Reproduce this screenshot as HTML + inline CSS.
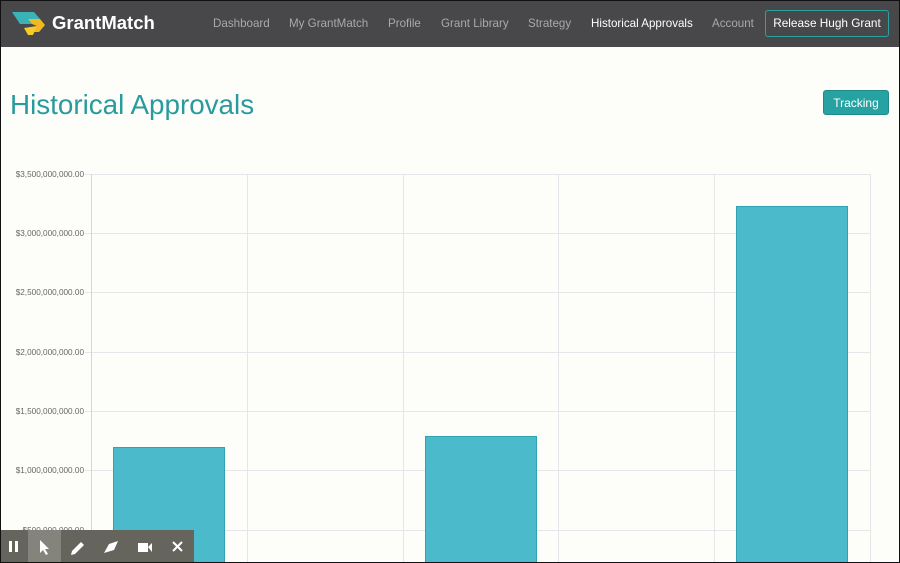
<!DOCTYPE html>
<html><head><style>
body{margin:0;width:900px;height:563px;overflow:hidden;background:#fdfdfa;font-family:"Liberation Sans",sans-serif;position:relative}
.frame{position:absolute;inset:0;border:1px solid #111;pointer-events:none;z-index:9}
.nav{position:absolute;left:0;top:0;width:900px;height:47px;background:#48484b;}
.nav a{position:absolute;top:17px;font-size:11.6px;color:#a9a9a9;text-decoration:none}
.logo{position:absolute;left:52px;top:12px;font-size:18.5px;font-weight:bold;color:#fff}
.btn{position:absolute;left:765px;top:10px;width:122px;height:25px;border:1px solid #2aa3a0;border-radius:3px;color:#fff;font-size:11.8px;text-align:center;line-height:25px}
h1{position:absolute;left:10px;top:89px;margin:0;font-size:27.8px;font-weight:normal;color:#2a9b9c}
.track{position:absolute;left:823px;top:90px;width:66px;height:25px;background:#27a2a2;border:1px solid #1e8a8a;border-radius:3px;color:#fff;font-size:12px;text-align:center;line-height:24px;box-sizing:border-box}
.tb{position:absolute;left:0;top:530px;width:194px;height:33px;background:#65645d}
</style></head><body>
<div class="nav">
<svg style="position:absolute;left:10px;top:10px" width="40" height="27" viewBox="0 0 40 27">
<polygon points="2,2 24,2 30,9 18,9 22,14 10,14" fill="#3ab3b8"/>
<polygon points="18,9 30,9 35,15 29,22 23,22 27,16 22,14" fill="#f2b822"/>
<polygon points="14,18 27,16 23,25 18,25" fill="#f6cb2c"/>
</svg>
<div class="logo">GrantMatch</div>
<a style="left:213px">Dashboard</a>
<a style="left:289px">My GrantMatch</a>
<a style="left:388px">Profile</a>
<a style="left:441px">Grant Library</a>
<a style="left:528px">Strategy</a>
<a style="left:591px;color:#fff">Historical Approvals</a>
<a style="left:712px">Account</a>
<div class="btn">Release Hugh Grant</div>
</div>
<h1>Historical Approvals</h1>
<div class="track">Tracking</div>
<svg style="position:absolute;left:0;top:0" width="900" height="563">
<g stroke="#e6e6ea" stroke-width="1">
<line x1="85" y1="174.5" x2="870" y2="174.5"/>
<line x1="85" y1="233.5" x2="870" y2="233.5"/>
<line x1="85" y1="292.5" x2="870" y2="292.5"/>
<line x1="85" y1="352.5" x2="870" y2="352.5"/>
<line x1="85" y1="411.5" x2="870" y2="411.5"/>
<line x1="85" y1="470.5" x2="870" y2="470.5"/>
<line x1="85" y1="530.5" x2="870" y2="530.5"/>
<line x1="91.5" y1="174" x2="91.5" y2="563" stroke="#d6d6dc"/>
<line x1="247.5" y1="174" x2="247.5" y2="563"/>
<line x1="403.5" y1="174" x2="403.5" y2="563"/>
<line x1="558.5" y1="174" x2="558.5" y2="563"/>
<line x1="714.5" y1="174" x2="714.5" y2="563"/>
<line x1="870.5" y1="174" x2="870.5" y2="563"/>
</g>
<g font-size="8.2" fill="#666" text-anchor="end" font-family="Liberation Sans">
<text x="84" y="177">$3,500,000,000.00</text>
<text x="84" y="236">$3,000,000,000.00</text>
<text x="84" y="295">$2,500,000,000.00</text>
<text x="84" y="355">$2,000,000,000.00</text>
<text x="84" y="414">$1,500,000,000.00</text>
<text x="84" y="473">$1,000,000,000.00</text>
<text x="84" y="533">$500,000,000.00</text>
</g>
<g fill="#4bbaca" stroke="#2fa3b3">
<rect x="113.5" y="447.5" width="111" height="120"/>
<rect x="425.5" y="436.5" width="111" height="130"/>
<rect x="736.5" y="206.5" width="111" height="360"/>
</g>
</svg>
<div class="tb">
<div style="position:absolute;left:28px;top:0;width:33px;height:33px;background:#85847c"></div>
<svg width="194" height="33" style="position:absolute;left:0;top:0">
<rect x="9" y="11" width="3" height="11" fill="#fff"/><rect x="15" y="11" width="3" height="11" fill="#fff"/>
<path d="M40 10 L40 23 L43 20 L46 25 L48 24 L45 19 L49 19 Z" fill="#fff"/>
<path d="M71 25 L72 21 L81 12 L84 15 L75 24 Z" fill="#fff"/>
<path d="M104 23 L109 14 L118 11 L114 20 Z" fill="#fff"/>
<rect x="138" y="13" width="10" height="9" fill="#fff"/><path d="M148 17 L152 13 L152 22 Z" fill="#fff"/>
<path d="M173 12 L182 21 M182 12 L173 21" stroke="#fff" stroke-width="2"/>
</svg>
</div>
<div class="frame"></div>
</body></html>
